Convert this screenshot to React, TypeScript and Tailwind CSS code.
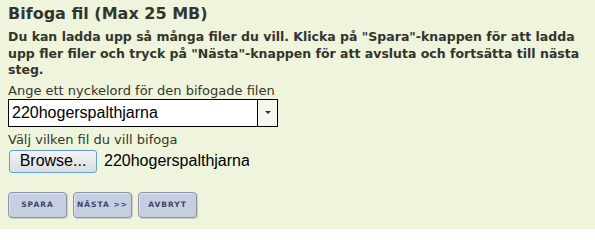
import { useState } from 'react';

const actions = ['SPARA', 'NÄSTA >>', 'AVBRYT'];

const App = () => {
  const [keyword, setKeyword] = useState('220hogerspalthjarna');

  return (
    <div className="w-[595px] h-[229px] bg-[#eef5dc] text-[#34342c] font-['DejaVu_Sans',sans-serif] px-2 pt-[4px] overflow-hidden">
      <h2 className="text-[16px] font-bold leading-[20px]">Bifoga fil (Max 25 MB)</h2>

      <p className="mt-[5px] text-[12.5px] font-bold leading-[16.5px] w-[585px]">
        Du kan ladda upp så många filer du vill. Klicka på "Spara"-knappen för att ladda upp fler filer och tryck på "Nästa"-knappen för att avsluta och fortsätta till nästa steg.
      </p>

      {/* Nyckelord */}
      <label className="block mt-[4px] text-[13px] leading-[16px]">Ange ett nyckelord för den bifogade filen</label>
      <div className="flex w-[270px] h-[28px] border border-black bg-white">
        <input
          value={keyword}
          onChange={(e) => setKeyword(e.target.value)}
          className="flex-1 min-w-0 px-[3px] font-['Liberation_Sans',sans-serif] text-[16px] text-black outline-none bg-white"
        />
        <div className="w-[20px] border-l border-black bg-[#f4f7ec] flex items-center justify-center">
          <span className="w-0 h-0 border-l-[3px] border-r-[3px] border-t-[3px] border-l-transparent border-r-transparent border-t-[#333]" />
        </div>
      </div>

      {/* Fil */}
      <label className="block mt-[5px] text-[13px] leading-[16px]">Välj vilken fil du vill bifoga</label>
      <div className="mt-[2px] flex items-center gap-[7px] font-['Liberation_Sans',sans-serif] text-[16px] text-black">
        <button className="ml-[1px] w-[88px] h-[23px] rounded-[3px] border border-[#5d9fd6] bg-gradient-to-b from-[#f4f4f4] to-[#d9dde2] leading-none">
          Browse...
        </button>
        <span className="w-[145px] h-[20px] leading-[20px] overflow-hidden whitespace-nowrap">220hogerspalthjarna</span>
      </div>

      {/* Knappar */}
      <div className="mt-[19px] flex gap-[6px]">
        {actions.map((a) => (
          <button
            key={a}
            className="w-[59px] h-[26px] rounded-[4px] border border-[#8c93a6] bg-[#c6cee2] shadow-[1px_1px_0_#e0e4ec_inset,1px_1px_1px_#c9cfbf] text-[7.5px] font-semibold tracking-[1px] text-[#3c4764] font-['DejaVu_Sans',sans-serif]"
          >
            {a}
          </button>
        ))}
      </div>
    </div>
  );
};

export default App;
